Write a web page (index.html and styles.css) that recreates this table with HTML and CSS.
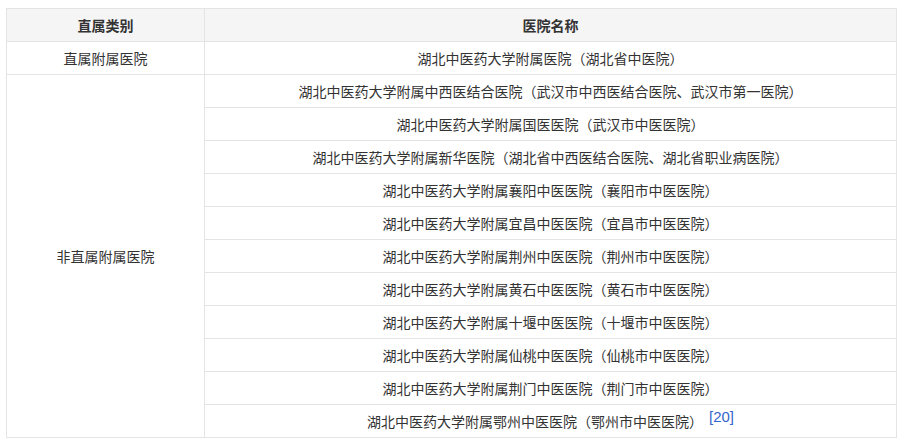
FILE: index.html
```html
<!DOCTYPE html>
<html lang="zh">
<head>
<meta charset="utf-8">
<link rel="stylesheet" href="styles.css">
</head>
<body>
<table class="tbl">
  <thead>
    <tr><th class="c1">直属类别</th><th class="c2">医院名称</th></tr>
  </thead>
  <tbody>
    <tr><td>直属附属医院</td><td>湖北中医药大学附属医院（湖北省中医院）</td></tr>
    <tr><td rowspan="11">非直属附属医院</td><td>湖北中医药大学附属中西医结合医院（武汉市中西医结合医院、武汉市第一医院）</td></tr>
    <tr><td>湖北中医药大学附属国医医院（武汉市中医医院）</td></tr>
    <tr><td>湖北中医药大学附属新华医院（湖北省中西医结合医院、湖北省职业病医院）</td></tr>
    <tr><td>湖北中医药大学附属襄阳中医医院（襄阳市中医医院）</td></tr>
    <tr><td>湖北中医药大学附属宜昌中医医院（宜昌市中医医院）</td></tr>
    <tr><td>湖北中医药大学附属荆州中医医院（荆州市中医医院）</td></tr>
    <tr><td>湖北中医药大学附属黄石中医医院（黄石市中医医院）</td></tr>
    <tr><td>湖北中医药大学附属十堰中医医院（十堰市中医医院）</td></tr>
    <tr><td>湖北中医药大学附属仙桃中医医院（仙桃市中医医院）</td></tr>
    <tr><td>湖北中医药大学附属荆门中医医院（荆门市中医医院）</td></tr>
    <tr><td>湖北中医药大学附属鄂州中医医院（鄂州市中医医院）<sup class="ref">[20]</sup></td></tr>
  </tbody>
</table>
</body>
</html>
```
FILE: styles.css
```css
html, body {
  margin: 0;
  padding: 0;
  background: #fff;
}
body {
  padding: 8px 8px 0 6px;
  font-family: "Microsoft YaHei", "Noto Sans CJK SC", "Noto Sans", sans-serif;
  font-size: 14px;
  color: #333;
}
.tbl {
  border-collapse: collapse;
  width: 891px;
  table-layout: fixed;
}
.tbl th, .tbl td {
  border: 1px solid #e4e4e4;
  text-align: center;
  vertical-align: middle;
  height: 33px;
  padding: 0 8px;
  box-sizing: border-box;
  line-height: 20px;
  font-weight: normal;
}
.tbl th {
  background: #f5f5f5;
  font-weight: bold;
  color: #333;
}
.c1 { width: 198px; }
.ref {
  font-family: "Liberation Sans", Arial, sans-serif;
  font-size: 15px;
  color: #3366cc;
  margin-left: 6px;
  vertical-align: 5px;
  line-height: 0;
}
```
